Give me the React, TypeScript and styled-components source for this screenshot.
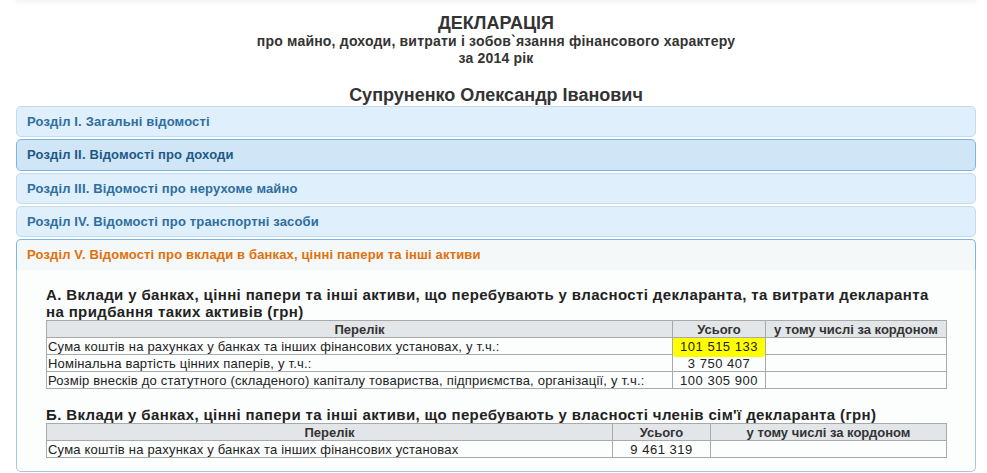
import React from "react";
import styled, { createGlobalStyle } from "styled-components";

const Global = createGlobalStyle`
  html, body { margin: 0; padding: 0; background: #ffffff; }
  body { font-family: "Liberation Sans", Arial, sans-serif; color: #222; }
`;

const Page = styled.div`
  width: 960px;
  margin-left: 16px;
`;

const TopShade = styled.div`
  height: 0;
  box-shadow: 0 0 4px 1px rgba(0, 0, 0, 0.12);
`;

const TitleBlock = styled.div`
  text-align: center;
  padding-top: 13px;
  color: #333;
`;

const Title = styled.h1`
  margin: 0;
  font-size: 18px;
  line-height: 20px;
  font-weight: bold;
`;

const Subtitle = styled.div`
  font-size: 14px;
  line-height: 17px;
  font-weight: bold;
  letter-spacing: 0.2px;
`;

const Person = styled.h2`
  margin: 17px 0 0;
  font-size: 18px;
  line-height: 22px;
  font-weight: bold;
  color: #333;
  text-align: center;
`;

const Accordion = styled.div`
  display: flex;
  flex-direction: column;
  gap: 2px;
`;

type HeaderState = "default" | "hover" | "active";

const palette: Record<HeaderState, { bg: string; border: string; color: string }> = {
  default: { bg: "#dfeffc", border: "#c5dbec", color: "#2e6e9e" },
  hover: { bg: "#d0e5f5", border: "#79b7e7", color: "#1d5987" },
  active: { bg: "#f5f8f9", border: "#79b7e7", color: "#e17009" },
};

const Header = styled.div<{ $state: HeaderState }>`
  border: 1px solid ${(p) => palette[p.$state].border};
  background: ${(p) => palette[p.$state].bg};
  color: ${(p) => palette[p.$state].color};
  border-radius: ${(p) => (p.$state === "active" ? "5px 5px 0 0" : "5px")};
  padding: 7px 10px 7.3px 10px;
  font-size: 13px;
  line-height: 15px;
  font-weight: bold;
  letter-spacing: 0.15px;
  ${(p) => (p.$state === "active" ? "border-bottom: 0; padding-bottom: 8.3px;" : "")}
`;

const Content = styled.div`
  border: 1px solid #a6c9e2;
  border-top: 0;
  border-radius: 0 0 5px 5px;
  background: #fcfdfd;
  padding: 16px 29px 13px 29px;
  margin-top: -2px;
`;

const SectionTitle = styled.h3<{ $gap?: number }>`
  margin: ${(p) => p.$gap ?? 0}px 0 0;
  font-size: 15px;
  line-height: 17px;
  font-weight: bold;
  color: #222;
  letter-spacing: 0.37px;
`;

const Table = styled.table`
  width: 900px;
  border-collapse: collapse;
  table-layout: fixed;
  font-size: 13px;
  color: #222;
`;

const Th = styled.th`
  background: #e3e6e9;
  border: 1px solid #a9a9a9;
  font-weight: bold;
  color: #333;
  padding: 0 2px;
  height: 16px;
  line-height: 15px;
  text-align: center;
`;

const Td = styled.td<{ $center?: boolean }>`
  border: 1px solid #a9a9a9;
  padding: 0 1px;
  height: 16px;
  line-height: 15px;
  text-align: ${(p) => (p.$center ? "center" : "left")};
  letter-spacing: ${(p) => (p.$center ? "0.5px" : "0.2px")};
  white-space: nowrap;
`;

const Marked = styled.td`
  border: 1px solid #a9a9a9;
  padding: 0 1px;
  height: 16px;
  line-height: 15px;
  text-align: center;
  letter-spacing: 0.5px;
  background: #ffff00;
  position: relative;
  &::after {
    content: "";
    position: absolute;
    left: 0;
    right: 0;
    bottom: -3px;
    height: 3px;
    background: #ffff00;
    border-radius: 0 0 3px 3px;
  }
`;

const sections = [
  { label: "Розділ I. Загальні відомості", state: "default" as HeaderState },
  { label: "Розділ II. Відомості про доходи", state: "hover" as HeaderState },
  { label: "Розділ III. Відомості про нерухоме майно", state: "default" as HeaderState },
  { label: "Розділ IV. Відомості про транспортні засоби", state: "default" as HeaderState },
];

export default function App() {
  return (
    <>
      <Global />
      <Page>
        <TopShade />
        <TitleBlock>
          <Title>ДЕКЛАРАЦІЯ</Title>
          <Subtitle>про майно, доходи, витрати і зобов`язання фінансового характеру</Subtitle>
          <Subtitle>за 2014 рік</Subtitle>
        </TitleBlock>
        <Person>Супруненко Олександр Іванович</Person>
        <Accordion>
          {sections.map((s) => (
            <Header key={s.label} $state={s.state}>
              {s.label}
            </Header>
          ))}
          <Header $state="active">
            Розділ V. Відомості про вклади в банках, цінні папери та інші активи
          </Header>
          <Content>
            <SectionTitle>
              А. Вклади у банках, цінні папери та інші активи, що перебувають у власності декларанта, та витрати декларанта на придбання таких активів (грн)
            </SectionTitle>
            <Table>
              <colgroup>
                <col style={{ width: 626 }} />
                <col style={{ width: 93 }} />
                <col style={{ width: 181 }} />
              </colgroup>
              <thead>
                <tr>
                  <Th>Перелік</Th>
                  <Th>Усього</Th>
                  <Th>у тому числі за кордоном</Th>
                </tr>
              </thead>
              <tbody>
                <tr>
                  <Td>Сума коштів на рахунках у банках та інших фінансових установах, у т.ч.:</Td>
                  <Marked>101 515 133</Marked>
                  <Td />
                </tr>
                <tr>
                  <Td>Номінальна вартість цінних паперів, у т.ч.:</Td>
                  <Td $center>3 750 407</Td>
                  <Td />
                </tr>
                <tr>
                  <Td>Розмір внесків до статутного (складеного) капіталу товариства, підприємства, організації, у т.ч.:</Td>
                  <Td $center>100 305 900</Td>
                  <Td />
                </tr>
              </tbody>
            </Table>
            <SectionTitle $gap={17}>
              Б. Вклади у банках, цінні папери та інші активи, що перебувають у власності членів сім'ї декларанта (грн)
            </SectionTitle>
            <Table>
              <colgroup>
                <col style={{ width: 566 }} />
                <col style={{ width: 98 }} />
                <col style={{ width: 236 }} />
              </colgroup>
              <thead>
                <tr>
                  <Th>Перелік</Th>
                  <Th>Усього</Th>
                  <Th>у тому числі за кордоном</Th>
                </tr>
              </thead>
              <tbody>
                <tr>
                  <Td>Сума коштів на рахунках у банках та інших фінансових установах</Td>
                  <Td $center>9 461 319</Td>
                  <Td />
                </tr>
              </tbody>
            </Table>
          </Content>
        </Accordion>
      </Page>
    </>
  );
}
